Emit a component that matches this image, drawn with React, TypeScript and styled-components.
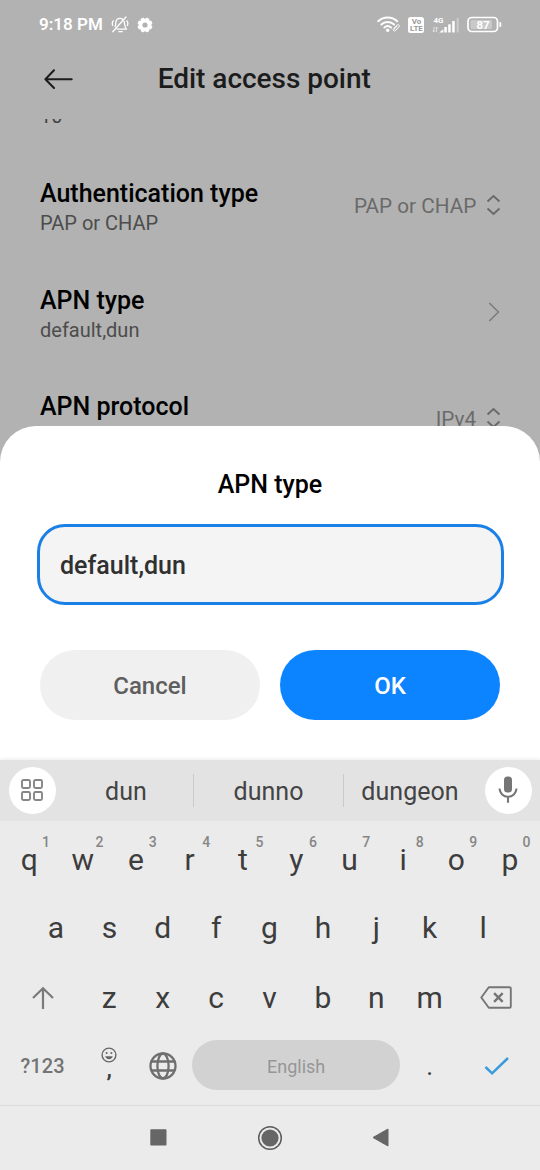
import React from "react";
import styled, { createGlobalStyle } from "styled-components";

const GlobalStyle = createGlobalStyle`
  * { box-sizing: border-box; }
  body { margin: 0; font-family: Roboto, "Liberation Sans", sans-serif; }
  button, input { font-family: inherit; border: 0; padding: 0; margin: 0; background: none; }
  svg { display: block; flex: none; }
`;

const Screen = styled.div`
  width: 540px;
  height: 1170px;
  display: flex;
  flex-direction: column;
  background: #b2b2b2;
  overflow: hidden;
`;

const SettingsPage = styled.div`
  height: 426px;
  flex: none;
  display: flex;
  flex-direction: column;
  overflow: hidden;
`;

const StatusBar = styled.div`
  height: 50px;
  flex: none;
  display: flex;
  align-items: center;
  justify-content: space-between;
  padding: 0 38px 1px 39px;
  color: #fff;
`;

const StatusGroup = styled.div<{ $gap: number }>`
  display: flex;
  align-items: center;
  gap: ${(p) => p.$gap}px;
`;

const Clock = styled.span`
  font-size: 17px;
  font-weight: 600;
  line-height: 20px;
  width: 64px;
  padding-bottom: 1px;
  white-space: nowrap;
`;

const Header = styled.header`
  height: 58px;
  flex: none;
  margin-bottom: 11px;
  display: grid;
  grid-template-columns: 60px 1fr 60px;
  align-items: center;
  padding: 0 50px 0 43.5px;
`;

const HeaderTitle = styled.h1`
  margin: 0 -7.5px 0 -12.5px;
  text-align: center;
  font-size: 28px;
  font-weight: 500;
  line-height: 32px;
  letter-spacing: -0.03px;
  color: #1c1c1c;
  white-space: nowrap;
`;

const List = styled.div`
  flex: 1;
  overflow: hidden;
  padding: 0 40px;
`;

const ScrolledSummary = styled.div`
  margin: -15px 0 27px;
  font-size: 20px;
  line-height: 24px;
  color: #444;
`;

const Row = styled.div`
  height: 106.5px;
  display: flex;
  align-items: center;
  justify-content: space-between;
`;

const RowTitle = styled.div`
  padding-top: 1px;
  margin-bottom: -1px;
  font-size: 25px;
  font-weight: 500;
  line-height: 30px;
  color: #000;
`;

const RowSummary = styled.div`
  font-size: 20px;
  line-height: 30px;
  color: #4c4c4c;
  min-height: 30px;
`;

const RowValue = styled.div`
  display: flex;
  align-items: center;
  gap: 9.5px;
  margin: -6px -0.7px 0 0;
  font-size: 20.7px;
  line-height: 30px;
  color: #6a6a6a;
`;

const ValueText = styled.span`
  padding-top: 1px;
`;

const Sheet = styled.section`
  height: 334px;
  flex: none;
  border-radius: 36px 36px 0 0;
  background: #fff;
  padding: 44px 36.5px 0;
  display: flex;
  flex-direction: column;
`;

const SheetTitle = styled.h2`
  margin: 0 0 24px;
  font-size: 25px;
  font-weight: 500;
  line-height: 30px;
  text-align: center;
  color: #000;
`;

const Field = styled.div`
  height: 81px;
  display: flex;
  align-items: center;
  border: 3px solid #1a80e6;
  border-radius: 28px;
  background: #f4f4f4;
  padding: 2px 20.5px 0;
  font-size: 25px;
  font-weight: 500;
  color: #303030;
`;

const Actions = styled.div`
  display: grid;
  grid-template-columns: 1fr 1fr;
  gap: 20px;
  margin: 45px 3.5px 0;
`;

const ActionButton = styled.button<{ $primary?: boolean }>`
  height: 70px;
  border-radius: 35px;
  font-size: 24px;
  font-weight: 500;
  padding-top: 1px;
  color: ${(p) => (p.$primary ? "#fff" : "#5e5e5e")};
  background: ${(p) => (p.$primary ? "#0d84ff" : "#f0f0f0")};
`;

const SuggestionBar = styled.div`
  height: 61px;
  flex: none;
  display: flex;
  align-items: center;
  padding: 0 8.5px 1px;
  background: #e3e3e3;
  box-shadow: 0 -1px 3px rgba(0, 0, 0, 0.08);
`;

const RoundButton = styled.button`
  width: 47px;
  height: 47px;
  flex: none;
  border-radius: 50%;
  background: #fff;
  display: flex;
  align-items: center;
  justify-content: center;
`;

const Suggestions = styled.div`
  flex: 1;
  display: grid;
  grid-template-columns: 134px 150px 133px;
  justify-content: center;
  padding-right: 5px;
`;

const Suggestion = styled.div`
  height: 33px;
  padding-top: 3px;
  display: flex;
  align-items: center;
  justify-content: center;
  font-size: 25px;
  letter-spacing: 0.05px;
  color: #444;
  & + & { border-left: 1px solid #cacaca; }
`;

const Keys = styled.div`
  height: 284px;
  flex: none;
  background: #ebebeb;
  padding: 3px 2.6px 0;
`;

const KeyRow = styled.div<{ $inset?: number; $drop?: number }>`
  height: 69px;
  display: flex;
  align-items: center;
  padding: ${(p) => p.$drop ?? 0}px ${(p) => p.$inset ?? 0}px 0;
`;

const Key = styled.div<{ $width?: number }>`
  position: relative;
  width: ${(p) => p.$width ?? 53.4}px;
  height: 69px;
  flex: none;
  display: flex;
  align-items: center;
  justify-content: center;
  font-size: 30px;
  color: #3d3d3d;
`;

const KeyHint = styled.span`
  position: absolute;
  top: 9px;
  left: 37.4px;
  width: 12px;
  text-align: center;
  font-size: 14px;
  font-weight: 500;
  line-height: 16px;
  color: #868686;
`;

const SymbolsLabel = styled.span`
  font-size: 20px;
  font-weight: 500;
  letter-spacing: 0.1px;
  color: #747474;
`;

const CommaKey = styled(Key)`
  flex-direction: column;
  justify-content: flex-start;
  padding-top: 16px;
`;

const Comma = styled.span`
  margin-top: -4px;
  font-size: 24px;
  line-height: 20px;
  font-weight: 500;
`;

const PeriodKey = styled(Key)`
  font-size: 26px;
`;

const SpaceBar = styled.div`
  width: 208px;
  height: 50px;
  margin: 0 2.8px 1px;
  flex: none;
  border-radius: 25px;
  background: #d2d2d2;
  display: flex;
  align-items: center;
  justify-content: center;
  padding-top: 2px;
  font-size: 18px;
  color: #969696;
`;

const NavBar = styled.nav`
  height: 65px;
  flex: none;
  display: grid;
  grid-template-columns: 112px 112px 108px;
  justify-items: center;
  align-items: center;
  padding: 0 0 1px 102px;
  border-top: 1px solid #dcdcdc;
  background: #ebebeb;
`;

const MutedBell = () => (
  <svg width="18" height="17" viewBox="0 0 18 17" fill="none" stroke="#fff" strokeWidth="1.3" strokeLinecap="round" strokeLinejoin="round">
    <path d="M4.200 10.600c.4-1 .5-2 .5-3.300C4.800 4.300 6.500 2.300 9 2.300c1 0 1.900.300 2.600.900M13.200 5.500c.5 2.500.1 5.200 2.300 7.600H6.200M8 15.700h3.200M15 1L1.800 15.800" />
    <path d="M2.200 4.800C1.200 6.200 1.100 8 1.800 9.500M15.900 4.800c1.100 1.500 1.200 3.200.5 4.700" />
  </svg>
);

const Gear = () => (
  <svg width="16" height="16" viewBox="0 0 16 16">
    <g fill="#fff">
      {[0, 45, 90, 135].map((a) => (
        <rect key={a} x="6" y="0.500" width="4" height="15" rx="1.200" transform={`rotate(${a + 22.5} 8 8)`} />
      ))}
    </g>
    <circle cx="8" cy="8" r="4.400" fill="none" stroke="#fff" strokeWidth="3.600" />
    <circle cx="8" cy="8" r="2.600" fill="#b2b2b2" />
  </svg>
);

const Wifi = () => (
  <svg width="24" height="17" viewBox="0 0 24 17" fill="none" stroke="#fff" strokeLinecap="round">
    <path d="M1.200 5.200c5.400-5 13.600-5 19 0M4.300 8.500c3.700-3.400 9.100-3.400 12.800 0M7.300 11.600c2-1.800 4.800-1.800 6.800 0" strokeWidth="1.900" />
    <circle cx="10.700" cy="14.300" r="1.700" fill="#fff" stroke="none" />
    <path d="M16.300 13.300l3.800-4.200c1.200-1.200 3 .3 1.900 1.600l-3.600 4c-1 1-2.400-.3-1.500-1.300l2.900-3.200" strokeWidth="1" />
  </svg>
);

const Badge = styled.span`
  width: 16px;
  height: 16px;
  border-radius: 2.5px;
  background: #fff;
  color: #999;
  display: flex;
  flex-direction: column;
  align-items: center;
  justify-content: center;
  font-size: 8px;
  font-weight: 700;
  line-height: 7px;
`;

const Signal = () => (
  <svg width="28" height="18" viewBox="0 0 28 18">
    <text x="1.500" y="6.600" fontSize="8" fontWeight="700" fill="#fff">4G</text>
    <g fill="#fff">
      <path d="M7.300 16.500l4-3.300v3.300z" />
      <rect x="12.300" y="11" width="2.500" height="5.500" rx="0.500" />
      <rect x="16.200" y="8.300" width="2.500" height="8.200" rx="0.500" />
      <rect x="20.200" y="5" width="2.500" height="11.500" rx="0.500" />
      <rect x="24.700" y="2" width="2" height="14.500" rx="0.500" opacity="0.350" />
    </g>
    <path d="M2 11v5M0.700 14.600l1.300 1.500M4.400 16v-5M4.400 11l1.300 1.500" stroke="#fff" strokeWidth="0.800" fill="none" opacity="0.800" />
  </svg>
);

const Battery = () => (
  <svg width="35" height="17" viewBox="0 0 35 17">
    <rect x="1" y="1.500" width="29.500" height="14" rx="3.800" fill="none" stroke="#fff" strokeWidth="1.700" />
    <rect x="3.500" y="4" width="21.500" height="9" rx="1.500" fill="#fff" opacity="0.300" />
    <rect x="32.400" y="6" width="1.800" height="5" rx="0.800" fill="#fff" />
    <text x="16" y="12.600" textAnchor="middle" fontSize="11.500" fontWeight="700" fill="#fff">87</text>
  </svg>
);

const BackArrow = () => (
  <svg width="30" height="20" viewBox="0 0 30 20" fill="none" stroke="#1c1c1c" strokeWidth="2" strokeLinecap="round" strokeLinejoin="round">
    <path d="M27.700 10.300H1.400M10 1.300L1.400 10.300l8.600 8.700" />
  </svg>
);

const UpDown = () => (
  <svg width="15" height="22" viewBox="0 0 15 22" fill="none" stroke="#6a6a6a" strokeWidth="1.900">
    <path d="M1.500 7.500l6-5.500 6 5.500M1.500 14.500l6 5.500 6-5.500" />
  </svg>
);

const ChevronRight = () => (
  <svg width="13" height="20" viewBox="0 0 13 20" fill="none" stroke="#7b7b7b" strokeWidth="1.500">
    <path d="M1.300 1l9.200 9-9.200 9" />
  </svg>
);

const GridIcon = () => (
  <svg width="22" height="22" viewBox="0 0 22 22" fill="none" stroke="#868686" strokeWidth="1.900">
    {[1, 13].map((x) => [1, 13].map((y) => (
      <rect key={`${x}${y}`} x={x} y={y} width="8" height="8" rx="1.500" />
    )))}
  </svg>
);

const Mic = () => (
  <svg width="20" height="28" viewBox="0 0 20 28">
    <rect x="6" y="0.500" width="8" height="16" rx="3.500" fill="#757575" />
    <path d="M1.500 12.500c.3 5 3.900 8.200 8.500 8.200s8.200-3.200 8.500-8.200M10 20.700v6" fill="none" stroke="#757575" strokeWidth="2.100" />
  </svg>
);

const Shift = () => (
  <svg width="22" height="24" viewBox="0 0 22 24" fill="none" stroke="#7a7a7a" strokeWidth="2.200">
    <path d="M11 23V2.300M1 12L11 2.300l10 9.700" />
  </svg>
);

const Backspace = () => (
  <svg width="32" height="23" viewBox="0 0 32 23" fill="none" stroke="#757575">
    <path d="M8.800 1.200H29.500c.8 0 1.300.5 1.300 1.300v18c0 .8-.5 1.300-1.300 1.300H8.800L1.300 11.500z" strokeWidth="1.900" strokeLinejoin="round" />
    <path d="M14.100 7.200l8.600 8.600M22.700 7.200l-8.600 8.600" strokeWidth="2.400" />
  </svg>
);

const Smiley = () => (
  <svg width="16" height="16" viewBox="0 0 16 16">
    <circle cx="8" cy="8" r="6.900" fill="none" stroke="#666" strokeWidth="1.400" />
    <circle cx="5.600" cy="6" r="1" fill="#666" />
    <circle cx="10.400" cy="6" r="1" fill="#666" />
    <path d="M4.200 9.300h7.600c-.7 1.900-2.100 3-3.800 3s-3.100-1.100-3.800-3z" fill="#666" />
  </svg>
);

const Globe = () => (
  <svg width="28" height="28" viewBox="0 0 28 28" fill="none" stroke="#6f6f6f" strokeWidth="2.300">
    <circle cx="14" cy="14" r="12.500" />
    <ellipse cx="14" cy="14" rx="5.600" ry="12.500" />
    <path d="M2.500 9.500h23M2.500 18.500h23" />
  </svg>
);

const Check = () => (
  <svg width="26" height="20" viewBox="0 0 26 20" fill="none" stroke="#3a9bdb" strokeWidth="2.500">
    <path d="M2.500 11l6.600 6.300L25 2" />
  </svg>
);

const topKeys = [..."qwertyuiop"];
const topHints = [..."1234567890"];

export default function App() {
  return (
    <Screen>
      <GlobalStyle />
      <SettingsPage>
        <StatusBar>
          <StatusGroup $gap={8}>
            <Clock>9:18 PM</Clock>
            <MutedBell />
            <Gear />
          </StatusGroup>
          <StatusGroup $gap={7.3}>
            <Wifi />
            <Badge><span>Vo</span><span>LTE</span></Badge>
            <Signal />
            <Battery />
          </StatusGroup>
        </StatusBar>
        <Header>
          <BackArrow />
          <HeaderTitle>Edit access point</HeaderTitle>
        </Header>
        <List>
          <ScrolledSummary>10</ScrolledSummary>
          <Row>
            <div>
              <RowTitle>Authentication type</RowTitle>
              <RowSummary>PAP or CHAP</RowSummary>
            </div>
            <RowValue><ValueText>PAP or CHAP</ValueText><UpDown /></RowValue>
          </Row>
          <Row>
            <div>
              <RowTitle>APN type</RowTitle>
              <RowSummary>default,dun</RowSummary>
            </div>
            <RowValue><ChevronRight /></RowValue>
          </Row>
          <Row>
            <div>
              <RowTitle>APN protocol</RowTitle>
              <RowSummary />
            </div>
            <RowValue><ValueText>IPv4</ValueText><UpDown /></RowValue>
          </Row>
        </List>
      </SettingsPage>

      <Sheet>
        <SheetTitle>APN type</SheetTitle>
        <Field>default,dun</Field>
        <Actions>
          <ActionButton>Cancel</ActionButton>
          <ActionButton $primary>OK</ActionButton>
        </Actions>
      </Sheet>

      <SuggestionBar>
        <RoundButton><GridIcon /></RoundButton>
        <Suggestions>
          <Suggestion>dun</Suggestion>
          <Suggestion>dunno</Suggestion>
          <Suggestion>dungeon</Suggestion>
        </Suggestions>
        <RoundButton><Mic /></RoundButton>
      </SuggestionBar>

      <Keys>
        <KeyRow $drop={2}>
          {topKeys.map((k, i) => (
            <Key key={k}>{k}<KeyHint>{topHints[i]}</KeyHint></Key>
          ))}
        </KeyRow>
        <KeyRow $inset={26.7}>
          {[..."asdfghjkl"].map((k) => <Key key={k}>{k}</Key>)}
        </KeyRow>
        <KeyRow $drop={2}>
          <Key $width={80}><Shift /></Key>
          {[..."zxcvbnm"].map((k) => <Key key={k}>{k}</Key>)}
          <Key $width={80}><Backspace /></Key>
        </KeyRow>
        <KeyRow>
          <Key $width={80}><SymbolsLabel>?123</SymbolsLabel></Key>
          <CommaKey><Smiley /><Comma>,</Comma></CommaKey>
          <Key><Globe /></Key>
          <SpaceBar>English</SpaceBar>
          <PeriodKey>.</PeriodKey>
          <Key $width={80}><Check /></Key>
        </KeyRow>
      </Keys>

      <NavBar>
        <svg width="17" height="17" viewBox="0 0 17 17"><rect x="0.300" y="0.300" width="16.200" height="16.200" rx="0.800" fill="#666" /></svg>
        <svg width="26" height="26" viewBox="0 0 26 26">
          <circle cx="13" cy="13" r="11.300" fill="none" stroke="#5c5c5c" strokeWidth="1.500" />
          <circle cx="13" cy="13" r="8.600" fill="#666" />
        </svg>
        <svg width="17" height="19" viewBox="0 0 17 19"><path d="M16 1v17L1 9.500z" fill="#666" stroke="#666" strokeWidth="1" strokeLinejoin="round" /></svg>
      </NavBar>
    </Screen>
  );
}
